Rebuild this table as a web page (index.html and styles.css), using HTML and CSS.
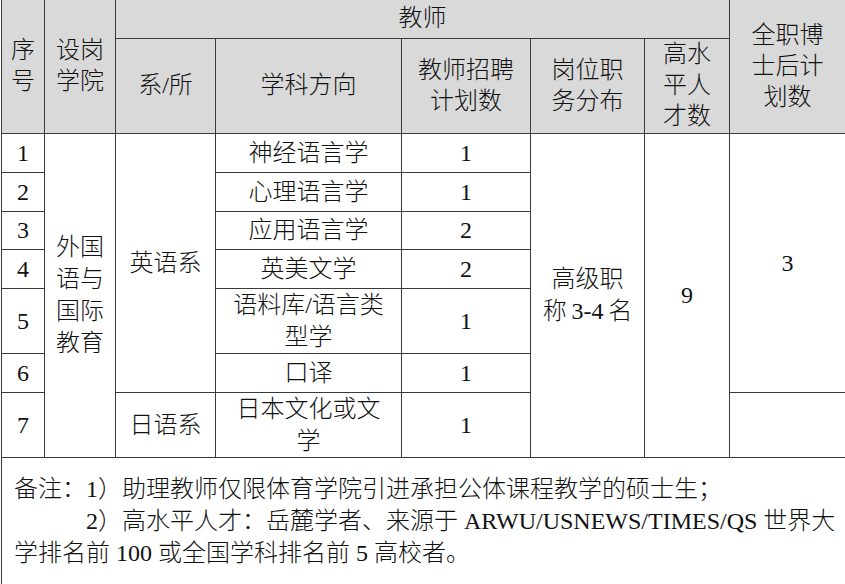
FILE: index.html
```html
<!DOCTYPE html>
<html lang="zh-CN">
<head>
<meta charset="utf-8">
<title>岗位设置表</title>
<link rel="stylesheet" href="styles.css">
</head>
<body>
<table class="recruit">
  <colgroup>
    <col class="c-no">
    <col class="c-school">
    <col class="c-dept">
    <col class="c-subject">
    <col class="c-plan">
    <col class="c-rank">
    <col class="c-talent">
    <col class="c-postdoc">
  </colgroup>
  <thead>
    <tr class="row-h1">
      <th rowspan="2">序<br>号</th>
      <th rowspan="2">设岗<br>学院</th>
      <th colspan="5">教师</th>
      <th rowspan="2" class="postdoc-head">全职博<br>士后计<br>划数</th>
    </tr>
    <tr class="row-h2">
      <th>系/所</th>
      <th>学科方向</th>
      <th>教师招聘<br>计划数</th>
      <th>岗位职<br>务分布</th>
      <th>高水<br>平人<br>才数</th>
    </tr>
  </thead>
  <tbody>
    <tr class="row">
      <td>1</td>
      <td rowspan="7" class="stack">外国<br>语与<br>国际<br>教育</td>
      <td rowspan="6">英语系</td>
      <td>神经语言学</td>
      <td>1</td>
      <td rowspan="7">高级职<br>称&thinsp;3-4&thinsp;名</td>
      <td rowspan="7">9</td>
      <td rowspan="6">3</td>
    </tr>
    <tr class="row">
      <td>2</td>
      <td>心理语言学</td>
      <td>1</td>
    </tr>
    <tr class="row row-short">
      <td>3</td>
      <td>应用语言学</td>
      <td>2</td>
    </tr>
    <tr class="row">
      <td>4</td>
      <td>英美文学</td>
      <td>2</td>
    </tr>
    <tr class="row row-tall">
      <td>5</td>
      <td>语料库/语言类<br>型学</td>
      <td>1</td>
    </tr>
    <tr class="row">
      <td>6</td>
      <td>口译</td>
      <td>1</td>
    </tr>
    <tr class="row row-tall">
      <td>7</td>
      <td>日语系</td>
      <td>日本文化或文<br>学</td>
      <td>1</td>
      <td></td>
    </tr>
  </tbody>
  <tfoot>
    <tr>
      <td colspan="8" class="notes">
        <p class="note-line">备注：1）助理教师仅限体育学院引进承担公体课程教学的硕士生；</p>
        <p class="note-line note-indent">2）高水平人才：岳麓学者、来源于 ARWU/USNEWS/TIMES/QS 世界大<br><span class="note-wrap">学排名前 100 或全国学科排名前 5 高校者。</span></p>
      </td>
    </tr>
  </tfoot>
</table>
</body>
</html>
```

FILE: styles.css
```css
html, body {
  margin: 0;
  padding: 0;
  background: #ffffff;
  overflow: hidden;
}

.recruit {
  border-collapse: collapse;
  table-layout: fixed;
  width: 844px;
  margin-left: 1px;
  font-family: "Liberation Serif", "Noto Sans CJK SC", serif;
  font-size: 24px;
  font-weight: 300;
  color: #111;
}

.c-no { width: 43px; }
.c-school { width: 71px; }
.c-dept { width: 100px; }
.c-subject { width: 186px; }
.c-plan { width: 129px; }
.c-rank { width: 114px; }
.c-talent { width: 85px; }
.c-postdoc { width: 116px; }

.recruit th,
.recruit td {
  border: 1px solid #3a3a3a;
  padding: 0;
  text-align: center;
  vertical-align: middle;
  font-weight: 300;
  line-height: 32px;
  white-space: nowrap;
  overflow: hidden;
}

.recruit thead th {
  background: #d9d9d9;
  line-height: 31px;
}

.row-h1 th {
  border-top-style: hidden;
}

.row-h1 { height: 38px; }
.row-h2 { height: 95px; }
.row { height: 39px; }
.row-short { height: 38px; }
.row-tall { height: 64px; }

.stack {
  line-height: 31px;
}

.recruit .notes {
  text-align: left;
  vertical-align: top;
  padding: 15px 8px 40px 12px;
  border-bottom-style: hidden;
}

.note-line {
  margin: 0;
  line-height: 32px;
}

.note-indent {
  text-indent: 72px;
}
```
